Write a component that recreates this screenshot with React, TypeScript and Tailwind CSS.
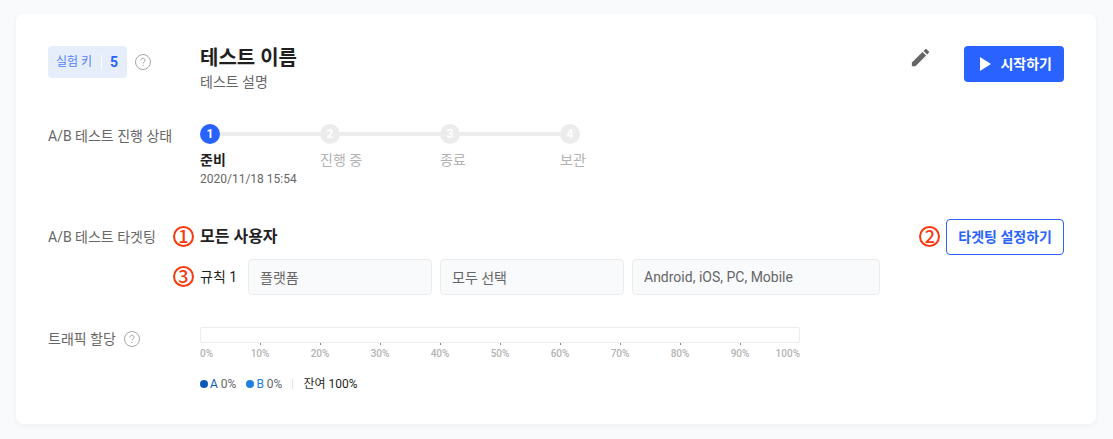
import { MdEdit, MdPlayArrow } from 'react-icons/md';

const steps = [
  { label: '준비', date: '2020/11/18 15:54', active: true },
  { label: '진행 중' },
  { label: '종료' },
  { label: '보관' },
];

const ticks = ['10%', '20%', '30%', '40%', '50%', '60%', '70%', '80%', '90%'];

function HelpButton({ label }: { label: string }) {
  return (
    <button type="button" aria-label={label} className="size-4 shrink-0 text-[#a6a6a6]">
      <svg viewBox="0 0 16 16" fill="none" stroke="currentColor" className="size-4">
        <circle cx="8" cy="8" r="7.5" />
        <path d="M5.9 6.4C5.9 5.1 6.8 4.3 8 4.3s2.1.8 2.1 1.9c0 1.5-2 1.6-2 3.3" />
        <path d="M7.5 11.5h1.1" strokeWidth="1.2" />
      </svg>
    </button>
  );
}

// numbered callout that hangs to the left of the element it describes
function Marker({ children }: { children: string }) {
  return (
    <span className="absolute top-[7px] right-full mr-[6px] flex size-[21px] items-center justify-center rounded-full border-2 border-[#f9380f] pb-[3px] font-['Noto_Sans_CJK_KR',sans-serif] text-lg leading-none font-medium text-[#f9380f]">
      {children}
    </span>
  );
}

export default function App() {
  return (
    <div className="min-h-screen bg-[#f9fafc] pt-[14px] pr-[17px] pb-[15px] pl-4 font-['Roboto','Noto_Sans_CJK_KR',sans-serif] text-sm text-[#666666]">
      <main className="flex flex-col gap-8 rounded-lg bg-white p-8 shadow-[0_2px_6px_rgba(0,0,0,0.04)]">
        <header className="flex items-start">
          <div className="flex w-[152px] shrink-0 items-center gap-2">
            <div className="flex h-8 items-center gap-2 rounded bg-[#e6eefc] px-2 text-[#2962ff]">
              <span className="pr-px text-xs text-[#5480fb]">실험 키</span>
              <span className="h-[14px] w-px bg-white" />
              <span className="pr-px font-bold">5</span>
            </div>
            <HelpButton label="실험 키 도움말" />
          </div>
          <div className="min-w-0 flex-1">
            <h1 className="text-xl leading-6 font-bold text-[#1f1f1f]">테스트 이름</h1>
            <p className="leading-6">테스트 설명</p>
          </div>
          <button type="button" aria-label="이름 수정" className="mr-8">
            <MdEdit size={23} />
          </button>
          <button
            type="button"
            className="flex h-9 items-center gap-1 rounded bg-[#2962ff] pr-3 pl-2 font-bold text-white"
          >
            <MdPlayArrow size={24} />
            시작하기
          </button>
        </header>

        <section className="-mt-[2px] flex items-start">
          <h2 className="w-[152px] shrink-0 leading-6">A/B 테스트 진행 상태</h2>
          <ol className="flex">
            {steps.map((step, i) => (
              <li key={step.label} className="w-[120px]">
                <div className="flex items-center">
                  <span
                    className={`flex size-5 items-center justify-center rounded-full text-xs font-bold text-white ${
                      step.active ? 'bg-[#2962ff]' : 'bg-[#ececec]'
                    }`}
                  >
                    {i + 1}
                  </span>
                  {i < steps.length - 1 && <span className="h-1 flex-1 bg-[#ececec]" />}
                </div>
                <p
                  className={`mt-1 leading-6 ${
                    step.active ? 'font-bold text-[#1f1f1f]' : 'text-[#b3b3b3]'
                  }`}
                >
                  {step.label}
                </p>
                {step.date && <p className="text-xs leading-[15px]">{step.date}</p>}
              </li>
            ))}
          </ol>
        </section>

        <section className="flex items-start">
          <h2 className="w-[152px] shrink-0 leading-9">A/B 테스트 타겟팅</h2>
          <div className="flex min-w-0 flex-1 flex-col gap-1">
            <div className="relative flex h-9 items-center justify-between">
              <Marker>1</Marker>
              <h3 className="text-base font-bold text-[#1f1f1f]">모든 사용자</h3>
              <div className="relative">
                <Marker>2</Marker>
                <button
                  type="button"
                  className="h-9 rounded border border-[#2962ff] px-[11px] font-bold text-[#2962ff]"
                >
                  타겟팅 설정하기
                </button>
              </div>
            </div>
            <div className="relative flex items-center gap-2">
              <Marker>3</Marker>
              <label htmlFor="rule-field" className="w-10 text-[#1f1f1f]">
                규칙 1
              </label>
              <input
                id="rule-field"
                readOnly
                value="플랫폼"
                className="h-9 w-[184px] rounded border border-[#ececec] bg-[#f9fafc] px-[11px] pb-px"
              />
              <input
                aria-label="조건"
                readOnly
                value="모두 선택"
                className="h-9 w-[184px] rounded border border-[#ececec] bg-[#f9fafc] px-[11px] pb-px"
              />
              <input
                aria-label="값"
                readOnly
                value="Android, iOS, PC, Mobile"
                className="h-9 w-[248px] rounded border border-[#ececec] bg-[#f9fafc] px-[11px]"
              />
            </div>
          </div>
        </section>

        <section className="flex items-start">
          <div className="flex w-[152px] shrink-0 items-center gap-2">
            <h2 className="leading-6">트래픽 할당</h2>
            <HelpButton label="트래픽 할당 도움말" />
          </div>
          <div className="max-w-[600px] flex-1">
            <div className="h-4 rounded-xs border border-[#ececec]" />
            <div className="flex text-[10px] leading-4 font-medium text-[#b3b3b3]">
              <span className="w-[5%] pt-[3px]">0%</span>
              {ticks.map((tick) => (
                <span key={tick} className="flex w-[10%] flex-col items-center gap-px">
                  <span className="h-[2px] w-px bg-[#888888]" />
                  {tick}
                </span>
              ))}
              <span className="flex w-[5%] justify-end pt-[3px]">100%</span>
            </div>
            <div className="mt-[14px] flex items-center gap-[10px] text-xs leading-4">
              <span className="flex items-center gap-[2px]">
                <span className="size-2 rounded-full bg-[#0d59b8]" />
                <span className="pr-px text-[#0d59b8]">A</span>0%
              </span>
              <span className="flex items-center gap-[2px]">
                <span className="size-2 rounded-full bg-[#1e80e0]" />
                <span className="pr-px text-[#1e80e0]">B</span>0%
              </span>
              <span className="h-[10px] w-px bg-[#e3e3e3]" />
              <span className="text-[#1f1f1f]">잔여 100%</span>
            </div>
          </div>
        </section>
      </main>
    </div>
  );
}
